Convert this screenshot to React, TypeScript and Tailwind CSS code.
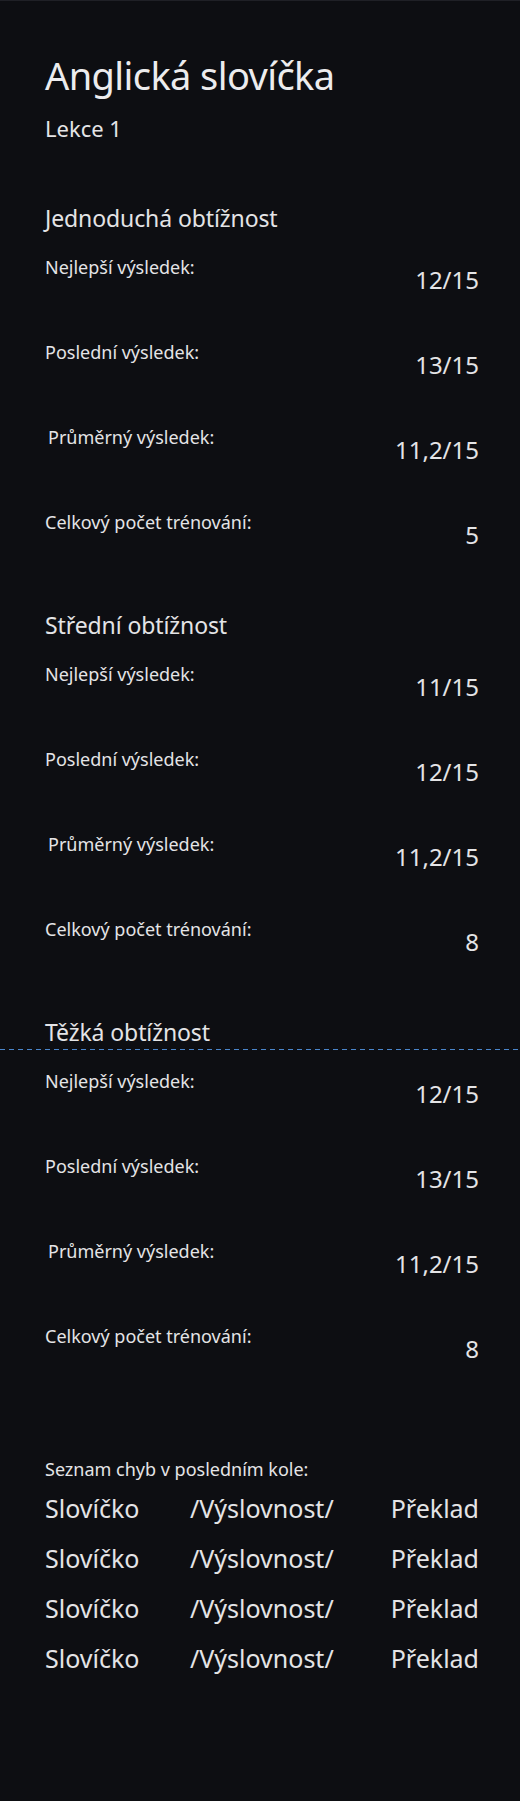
import React from "react";

const font = { fontFamily: '"Noto Sans", "Open Sans", sans-serif' };

type Row = { label: string; value: string; indent?: boolean };

function Section({ title, rows }: { title: string; rows: Row[] }) {
  return (
    <section className="mb-[14px]">
      <h2 className="text-[23px] leading-[32px] font-normal tracking-[-0.1px] text-[#e4e4e6]">{title}</h2>
      <div className="mt-[21px] flex flex-col">
        {rows.map((r, i) => (
          <div key={i} className="flex h-[85px] items-start justify-between">
            <span className={`text-[18px] leading-[24px] text-[#e4e4e6] ${r.indent ? "pl-[3px]" : ""}`}>{r.label}</span>
            <span className="mt-[9px] text-[24px] leading-[32px] text-[#e4e4e6]">{r.value}</span>
          </div>
        ))}
      </div>
    </section>
  );
}

export default function App() {
  const sections: { title: string; rows: Row[] }[] = [
    {
      title: "Jednoduchá obtížnost",
      rows: [
        { label: "Nejlepší výsledek:", value: "12/15" },
        { label: "Poslední výsledek:", value: "13/15" },
        { label: "Průměrný výsledek:", value: "11,2/15", indent: true },
        { label: "Celkový počet trénování:", value: "5" },
      ],
    },
    {
      title: "Střední obtížnost",
      rows: [
        { label: "Nejlepší výsledek:", value: "11/15" },
        { label: "Poslední výsledek:", value: "12/15" },
        { label: "Průměrný výsledek:", value: "11,2/15", indent: true },
        { label: "Celkový počet trénování:", value: "8" },
      ],
    },
    {
      title: "Těžká obtížnost",
      rows: [
        { label: "Nejlepší výsledek:", value: "12/15" },
        { label: "Poslední výsledek:", value: "13/15" },
        { label: "Průměrný výsledek:", value: "11,2/15", indent: true },
        { label: "Celkový počet trénování:", value: "8" },
      ],
    },
  ];

  return (
    <div className="relative min-h-[1801px] w-[520px] bg-[#0d0e12] border-t border-[#1f2026]" style={font}>
      <div className="pl-[45px] pr-[41px] pt-[50px] pb-[40px]">
        <h1 className="text-[38px] leading-[48px] font-normal tracking-[-0.6px] text-[#ececee]">Anglická slovíčka</h1>
        <p className="mt-[15px] text-[22px] leading-[28px] text-[#e4e4e6]">Lekce 1</p>
        <div className="mt-[60px]">
          {sections.map((s, i) => (
            <Section key={i} title={s.title} rows={s.rows} />
          ))}
        </div>
        <p className="mt-[48px] text-[18px] leading-[24px] text-[#e4e4e6]">Seznam chyb v posledním kole:</p>
        <div className="mt-[2px] flex flex-col">
          {[0, 1, 2, 3].map((i) => (
            <div key={i} className="grid h-[50px] grid-cols-[145px_1fr_auto] items-center text-[25px] leading-[50px] text-[#e4e4e6]">
              <span>Slovíčko</span>
              <span>/Výslovnost/</span>
              <span className="text-right">Překlad</span>
            </div>
          ))}
        </div>
      </div>
      <div className="absolute left-0 right-0 top-[1048px] h-px bg-[repeating-linear-gradient(to_right,#4a86cc_0_5px,transparent_5px_9px)]" />
    </div>
  );
}
